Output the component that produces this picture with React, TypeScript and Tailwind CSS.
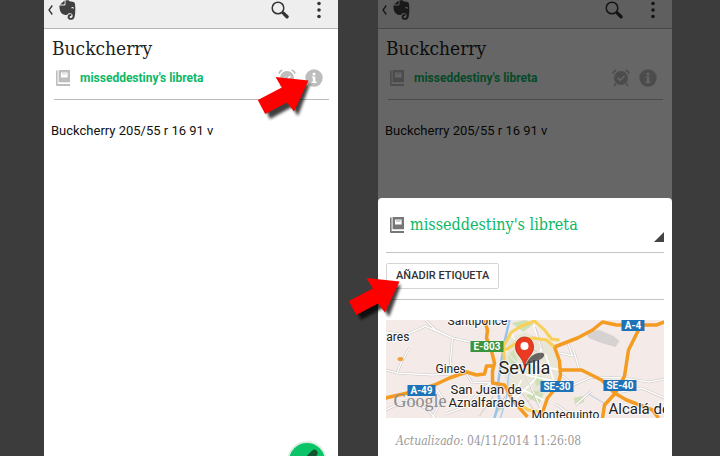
import { ReactNode } from "react";

type IconProps = { className?: string };

const NotebookIcon = ({ className }: IconProps) => (
    <svg viewBox="0 0 14 16" className={className} fill="currentColor">
        <path d="M0 .5h1.6v12.2H0z" />
        <path
            fillRule="evenodd"
            d="M2.6 0H14v12.2H2.6zM5 2.600v5h6.600v-5z"
        />
        <path d="M6 3.500h4.600v1H6z" opacity=".7" />
        <path d="M1.500 14H14v2H1.600C.6 16 0 15.300 0 14.400V12h1.500z" />
    </svg>
);

const ElephantIcon = () => (
    <svg viewBox="0 0 18 20" className="h-5 w-[18px]" fill="#404040">
        <path d="M5.600.4v3.100c0 .7-.4 1.100-1.100 1.100H1.200C2.500 3 4 1.600 5.600.4z" />
        <path d="M6.500.5C8 0 10.300.1 11 1.400c1.500.1 3.500.3 4.200.9.900.7 1.100 4 1.100 6.700 0 3.600-.3 7.300-1.100 9-.6 1.300-1.900 1.800-3.400 1.800-2 0-3.200-1.200-3.200-2.900 0-1.800 1.200-2.900 3-2.900h.7v2h-.6c-.7 0-1.100.3-1.100.9s.5 1 1.300 1c1.200 0 1.700-.8 1.700-2.100 0-1.700-.7-2.300-2.600-2.500l-1.300-.2c-.3 1.200-1.400 2-3.200 1.800C3.500 14.500 1.800 13.300 1 10.500.6 9 .3 7.200.4 5.600h4.500c1.100 0 1.600-.6 1.600-1.600z" />
        <path d="M12.200 8.300c.2-1 .8-1.400 1.500-1.300.8.1 1.200.7 1.300 1.700-.9-.4-1.800-.5-2.800-.4z" fill="#eee" />
    </svg>
);

const SearchIcon = () => (
    <svg viewBox="0 0 18 18" className="size-[18px]" fill="none" stroke="#333">
        <circle cx="7" cy="7" r="5.800" strokeWidth="1.500" />
        <path d="M11 11l1.800 1.800" strokeWidth="1.600" />
        <path d="M12.600 12.400l3.400 3.300" strokeWidth="3.400" strokeLinecap="round" />
    </svg>
);

const AlarmIcon = () => (
    <svg viewBox="0 0 18 18" className="size-[18px]" fill="none" stroke="currentColor">
        <circle cx="9" cy="9" r="7" fill="currentColor" stroke="none" />
        <path d="M.8 4.600C1.400 3 2.700 1.700 4.300 1.100M17.200 4.600c-.6-1.600-1.900-2.900-3.500-3.500" strokeWidth="1.600" />
        <path d="M4 14.500l-2 2.300M14 14.500l2 2.300" strokeWidth="1.800" />
        <path d="M5.800 8.900l2.500 2.300 4.200-4.300" stroke="#fff" strokeWidth="1.500" />
    </svg>
);

const InfoIcon = () => (
    <svg viewBox="0 0 18 18" className="size-[18px]">
        <circle cx="9" cy="9" r="8.700" fill="currentColor" />
        <circle cx="9" cy="4.900" r="1.500" fill="#fff" />
        <path d="M6.800 7.400h3.500v5.200h1.200v1.300H6.700v-1.300h1.200V8.700H6.800z" fill="#fff" />
    </svg>
);

const Arrow = ({ className }: IconProps) => (
    <svg viewBox="0 0 60 48" className={`absolute h-12 w-[60px] ${className}`}>
        <defs>
            <filter id="soft" x="-20%" y="-20%" width="150%" height="150%">
                <feGaussianBlur stdDeviation="1.600" />
            </filter>
        </defs>
        <path
            d="M8 32l24-12-2-8 24-2-12 32-6-9-22 12z"
            fill="#000"
            opacity=".75"
            filter="url(#soft)"
        />
        <path d="M19.500 3L52.500 6.500 38 37.500l-7-9L9.200 40 1.800 26l24-12.500z" fill="#fe0000" />
    </svg>
);

const Note = ({ children }: { children?: ReactNode }) => (
    <section className="relative min-w-0 flex-1 bg-white">
        <header className="flex h-[29px] items-center border-b border-[#b4b4b4] bg-[#eee] pr-[11px] pb-2 pl-1">
            <button aria-label="Atrás" className="mr-1.5">
                <svg viewBox="0 0 5 10" className="h-2.5 w-[5px]" fill="none" stroke="#333" strokeWidth="1.300">
                    <path d="M4.300.5L1 5l3.300 4.500" />
                </svg>
            </button>
            <ElephantIcon />
            <button aria-label="Buscar" className="ml-auto">
                <SearchIcon />
            </button>
            <button aria-label="Más opciones" className="ml-[22px] w-4">
                <svg viewBox="0 0 16 18" className="h-[18px] w-4" fill="#333">
                    <circle cx="8" cy="2.500" r="1.800" />
                    <circle cx="8" cy="9" r="1.800" />
                    <circle cx="8" cy="15.500" r="1.800" />
                </svg>
            </button>
        </header>
        <h1 className="px-2 pt-2 font-['DejaVu_Serif_Condensed','DejaVu_Serif',serif] text-[19px]/[22px] text-[#222]">
            Buckcherry
        </h1>
        <div className="mr-[9px] ml-2.5 flex h-[41px] items-center border-b border-[#bbb] pr-1.5 pb-0.5 pl-0.5 text-[#bdbdbd]">
            <NotebookIcon className="h-4 w-3.5" />
            <button className="ml-2.5 font-[Roboto,sans-serif] text-[12px]/[16px] font-bold text-[#0cb866]">
                misseddestiny's libreta
            </button>
            <button aria-label="Recordatorio" className="ml-auto">
                <AlarmIcon />
            </button>
            <button aria-label="Información" className="ml-[9px]">
                <InfoIcon />
            </button>
        </div>
        <p className="px-[7px] pt-[21px] font-[Roboto,sans-serif] text-[13px]/[20px] text-[#111]">
            Buckcherry 205/55 r 16 91 v
        </p>
        {children}
    </section>
);

const roads = [
    "M0 78l22-5 27-8 15-7 17-6 10 3 8-1 2-8h8",
    "M99 0l3 10-1 8 5 13 3 12-2 8v12l12 2 8 15 15 17",
    "M169 27l23-9 15-8 10-8 14 3h40l8-3",
    "M169 27l5 14 1 14-3 11-10 12-7 20",
    "M174 50h22l20 10 13 13 12 7 26 10 6 8",
    "M253 10l-10 20-4 26-9 17-11 12-2 13",
];

const streets =
    "M0 50l12 3 34 2 20-1M12 52l4-10 8-14M40 0l10 10 17 8-2 22 1 12M67 18l18 4M0 12l20 3 20-9 27 12M0 90l22-10 18 8 10 10M49 66l8 12-10 20M60 94l22-8 14-18 11-5M176 55l12 10 18-8 30 1 28 4 15-3M188 30l6 20M174 33l14 3M182 22l5 14M190 85l16-14M170 84l20 14M236 72l20-4 23 10M80 52l6 10 21 1";

const shields = [
    { label: "E-803", x: 85, y: 21, w: 33, color: "#3a953c" },
    { label: "A-49", x: 22, y: 65, w: 28, color: "#1d72b8" },
    { label: "A-4", x: 236, y: 0, w: 23, color: "#1d72b8" },
    { label: "SE-30", x: 155, y: 61, w: 33, color: "#1d72b8" },
    { label: "SE-40", x: 218, y: 60, w: 33, color: "#1d72b8" },
];

const places = [
    { name: "Santiponce", x: 62, y: 5, size: 12 },
    { name: "Olivares", x: -19, y: 21, size: 12 },
    { name: "Gines", x: 50, y: 53, size: 12 },
    { name: "San Juan de", x: 65, y: 74, size: 13 },
    { name: "Aznalfarache", x: 63, y: 87, size: 13 },
    { name: "Montequinto", x: 146, y: 99, size: 12 },
    { name: "Alcalá de", x: 223, y: 94, size: 15 },
    { name: "Sevilla", x: 113, y: 54, size: 18 },
];

const Map = () => (
    <svg
        viewBox="0 0 279 98"
        preserveAspectRatio="xMidYMid slice"
        className="h-[98px] w-full bg-[#f4ebe8] font-[Roboto,sans-serif]"
        fill="none"
    >
        <path d="M200 12l14-2 14 6 6 5-4 6-14-4-13-5z" fill="#d6d2d2" />
        <path d="M120 20l20-8 26 12 8 24-4 22-22 8-26-8-6-26z" fill="#e9e6d8" />
        <path d="M126 3l14-3 8 4-10 8zM140 76l8-6 10 4-4 10zM188 78l9-2 2 6-9 3zM122 36l6-6 4 10-5 8zM148 58l8-2 3 7-8 3zM109 82l7-4 2 10-7 5z" fill="#cfe0b4" />
        <path d={streets} stroke="#cbc6c2" strokeWidth="2.500" />
        <path d={streets} stroke="#fff" strokeWidth="1.400" />
        <g stroke="#fff" strokeWidth="1.500">
            <path d="M120 30l18 22 16 34 4 12M126 14l14 28 34 8M148 5l8 22-6 32-22 22M119 48l26 8 28 6M136 60l-12 24M160 34l8 26M130 66l28 14M104 88l20-10" />
        </g>
        <g stroke="#c9c4bc" strokeWidth=".8">
            <path d="M122 32l17 22 15 34M150 7l7 22M100 80l12 8 8-12M94 96l14-20M134 70l16 22M160 64l-18 18M128 20l24 12" />
        </g>
        <path d="M124 0l-5 22-4 24-3 22 2 12-5 18" stroke="#94c3ee" strokeWidth="2.500" />
        <path d="M129 42l-6 14-2 22-6 20" stroke="#a9cdf0" strokeWidth="1.500" />
        <path d="M203 74l12 7 6 4" stroke="#b3c8ea" />
        <g stroke="#f8cf57" strokeWidth="3">
            <path d="M136 6l13-5 10 9 7 9 8 1M119 44l-1-18 8-14 10-6 13-5M120 30l14-9 13-3 14 2 8 7M127 80l16 10 13 2" />
        </g>
        <g stroke="#f49b22" strokeWidth="3.500" strokeLinejoin="round">
            {roads.map((d) => (
                <path key={d} d={d} />
            ))}
        </g>
        <ellipse cx="15" cy="39" rx="3" ry="2" fill="#f0a040" />
        <text x="8" y="87" fontSize="18" fill="#8a8a8a" fontFamily="Liberation Serif">
            Google
        </text>
        {shields.map(({ label, x, y, w, color }) => (
            <g key={label}>
                <rect x={x} y={y} width={w} height="11" fill={color} />
                <text x={x + w / 2} y={y + 9} fontSize="10" fontWeight="700" textAnchor="middle" fill="#fff">
                    {label}
                </text>
            </g>
        ))}
        <g fill="#222" stroke="#fff" strokeOpacity=".7" strokeWidth="2" paintOrder="stroke">
            {places.map(({ name, x, y, size }) => (
                <text key={name} x={x} y={y} fontSize={size}>
                    {name}
                </text>
            ))}
        </g>
        <path d="M139 47c3-7 7-13 14-14 5-1 7 1 5 4-3 4-11 4-19 10z" fill="#444" opacity=".8" />
        <path
            d="M139 48c-1-7-3-9-6-13-2-3-3-5-3-8 0-6 4-10 9-10s9 4 9 10c0 3-1 5-3 8-3 4-5 6-6 13z"
            fill="#ea3a22"
            stroke="#b3200f"
            strokeWidth=".7"
        />
        <circle cx="139" cy="26" r="4" fill="#fff" />
    </svg>
);

const Details = () => (
    <div className="absolute inset-0 flex flex-col justify-end bg-black/60">
        <div className="relative rounded-t-sm bg-white px-2">
            <label className="relative flex h-[55px] items-center border-b border-[#c4c4c4] pl-1 text-[#777]">
                <NotebookIcon className="h-4 w-3.5" />
                <select
                    aria-label="Libreta"
                    className="ml-1.5 flex-1 appearance-none font-['DejaVu_Serif_Condensed','DejaVu_Serif',serif] text-[16px]/[22px] text-[#0cb866]"
                >
                    <option>misseddestiny's libreta</option>
                </select>
                <svg viewBox="0 0 10 10" className="absolute right-0 bottom-2.5 size-2.5">
                    <path d="M10 0v10H0z" fill="#444" />
                </svg>
            </label>
            <div className="border-b border-[#c4c4c4] py-2.5">
                <button className="block rounded-xs border border-[#d4d4d4] px-[9px] font-[Roboto,sans-serif] text-[11px]/[24px] font-medium text-[#333]">
                    AÑADIR ETIQUETA
                </button>
            </div>
            <div className="pt-5">
                <Map />
            </div>
            <p className="px-2.5 pt-3.5 pb-1.5 font-['DejaVu_Serif_Condensed','DejaVu_Serif',serif] text-[12px]/[18px] text-[#999]">
                <em>Actualizado:</em> 04/11/2014 11:26:08
            </p>
            <Arrow className="top-[77px] -left-[31px]" />
        </div>
    </div>
);

export default function App() {
    return (
        <main className="flex min-h-screen gap-10 overflow-hidden bg-[#3c3c3c] pr-12 pl-11">
            <Note>
                <Arrow className="top-[74px] right-[22px]" />
                <button
                    aria-label="Editar nota"
                    className="absolute right-[11px] -bottom-[25px] grid size-10 place-items-center rounded-full border-2 border-[#dcefe4] bg-[#0bc468]"
                >
                    <svg viewBox="0 0 24 24" className="size-6" fill="#14532f">
                        <path d="M18 1c2-1.500 5.500 1 4.500 4-.6 2-8 12-12 15l-7 2.500L6 15C9 10 14 4 18 1z" />
                    </svg>
                </button>
            </Note>
            <Note>
                <Details />
            </Note>
        </main>
    );
}
